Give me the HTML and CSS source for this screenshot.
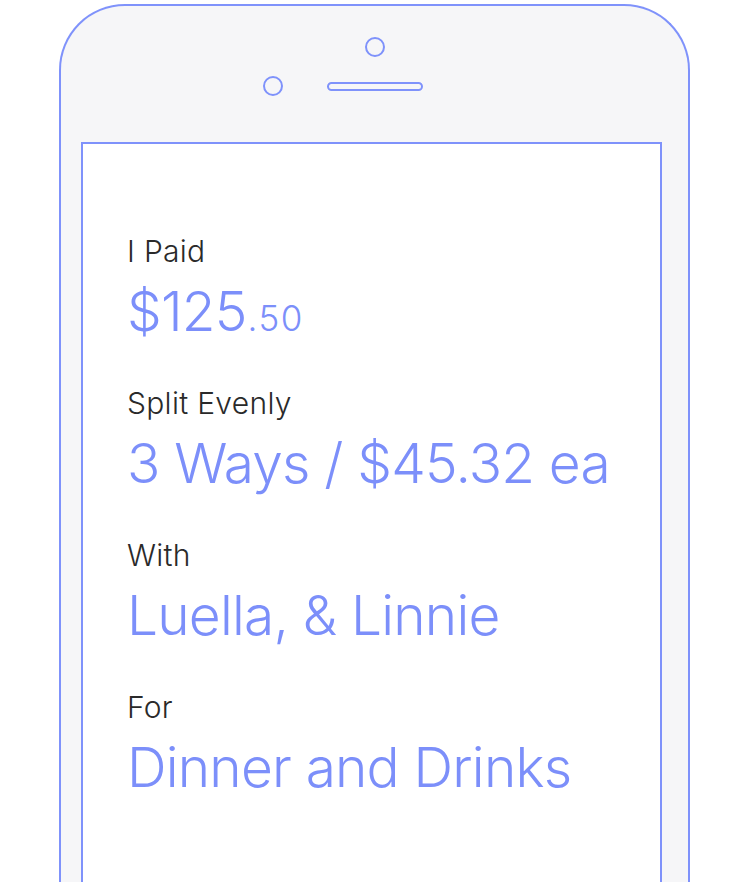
FILE: index.html
```html
<!DOCTYPE html>
<html lang="en">
<head>
<meta charset="utf-8">
<title>Split</title>
<link rel="stylesheet" href="styles.css">
</head>
<body>
<div class="phone">
  <div class="top">
    <div class="camera"></div>
    <div class="sensors">
      <div class="dot"></div>
      <div class="speaker"></div>
    </div>
  </div>
  <div class="screen">
    <div class="item">
      <div class="label">I Paid</div>
      <div class="value">$125<span class="cents">.50</span></div>
    </div>
    <div class="item">
      <div class="label">Split Evenly</div>
      <div class="value">3 Ways / $45.32 ea</div>
    </div>
    <div class="item">
      <div class="label">With</div>
      <div class="value">Luella, &amp; Linnie</div>
    </div>
    <div class="item">
      <div class="label">For</div>
      <div class="value">Dinner and Drinks</div>
    </div>
  </div>
</div>
</body>
</html>
```
FILE: styles.css
```css
html, body {
  margin: 0;
  padding: 0;
  background: #ffffff;
  overflow: hidden;
  height: 882px;
}
body {
  font-family: Inter, "Noto Sans", "Liberation Sans", sans-serif;
}
.phone {
  box-sizing: border-box;
  margin: 4px 0 0 59px;
  width: 631px;
  height: 878px;
  border: 2px solid #7f92fb;
  border-bottom: none;
  border-radius: 66px 66px 0 0;
  background: #f6f6f8;
  overflow: hidden;
}
.top {
  height: 136px;
  display: flex;
  flex-direction: column;
  align-items: center;
}
.camera {
  box-sizing: border-box;
  width: 20px;
  height: 20px;
  border: 2px solid #7f92fb;
  border-radius: 50%;
  margin-top: 31px;
}
.sensors {
  width: 100%;
  display: grid;
  grid-template-columns: 1fr auto 1fr;
  align-items: center;
  margin-top: 19px;
}
.dot {
  box-sizing: border-box;
  width: 20px;
  height: 20px;
  border: 2px solid #7f92fb;
  border-radius: 50%;
  justify-self: end;
  margin-right: 44px;
}
.speaker {
  box-sizing: border-box;
  width: 96px;
  height: 9px;
  border: 2px solid #7f92fb;
  border-radius: 5px;
}
.screen {
  box-sizing: border-box;
  margin-left: 20px;
  width: 581px;
  height: 742px;
  border: 2px solid #7f92fb;
  border-bottom: none;
  background: #ffffff;
  padding: 89px 0 0 44px;
  display: flex;
  flex-direction: column;
  gap: 41px;
}
.label {
  font-size: 30px;
  line-height: 36px;
  color: #2a2a2a;
  font-weight: 300;
  letter-spacing: 0.3px;
}
.value {
  margin-top: 9px;
  font-size: 55px;
  line-height: 66px;
  color: #7c8ffa;
  font-weight: 300;
  letter-spacing: -0.8px;
  white-space: nowrap;
}
.cents {
  font-size: 35px;
  line-height: 0;
  letter-spacing: 1.5px;
  margin-left: 1px;
}
```
